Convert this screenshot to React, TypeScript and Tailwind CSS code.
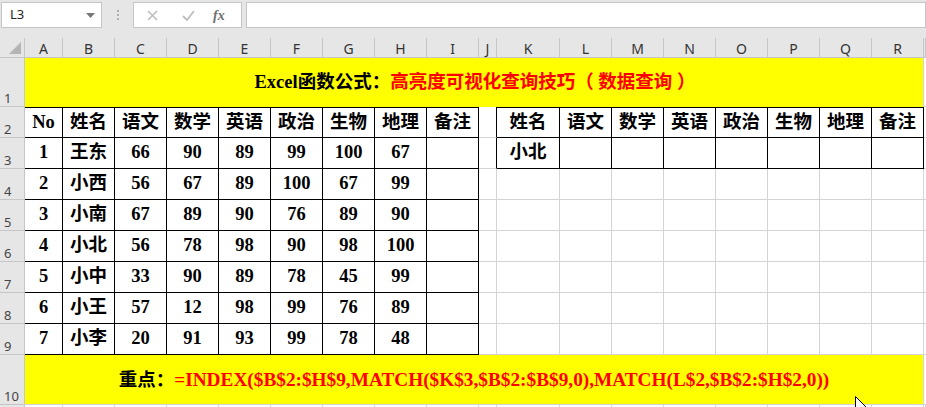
import React from 'react';

const COL_LETTERS = ['A', 'B', 'C', 'D', 'E', 'F', 'G', 'H', 'I', 'J', 'K', 'L', 'M', 'N', 'O', 'P', 'Q', 'R', ''];

const LEFT_HEAD = ['No', '姓名', '语文', '数学', '英语', '政治', '生物', '地理', '备注'];
const LEFT_ROWS: (string | number)[][] = [
  [1, '王东', 66, 90, 89, 99, 100, 67, ''],
  [2, '小西', 56, 67, 89, 100, 67, 99, ''],
  [3, '小南', 67, 89, 90, 76, 89, 90, ''],
  [4, '小北', 56, 78, 98, 90, 98, 100, ''],
  [5, '小中', 33, 90, 89, 78, 45, 99, ''],
  [6, '小王', 57, 12, 98, 99, 76, 89, ''],
  [7, '小李', 20, 91, 93, 99, 78, 48, ''],
];
const RIGHT_HEAD = ['姓名', '语文', '数学', '英语', '政治', '生物', '地理', '备注'];
const RIGHT_ROW = ['小北', '', '', '', '', '', '', ''];

const cellFont = "font-['Liberation_Serif','Noto_Sans_CJK_SC',serif] font-bold text-[18.5px] text-black";

function RowHead({ n }: { n: number }) {
  return (
    <div className="flex items-end pl-[4px] pb-[1px] bg-[#e6e6e6] border-r border-b border-[#c6c6c6] text-[13px] leading-none text-[#444] font-['Noto_Sans',sans-serif]">
      {n}
    </div>
  );
}

function Cell({ value, cls }: { value: string | number; cls: string }) {
  return (
    <div className={`flex items-center justify-center bg-white whitespace-nowrap ${cellFont} ${cls}`}>
      {value}
    </div>
  );
}

function bodyRow(r: number) {
  // r = sheet row number 2..9
  const out: React.ReactNode[] = [];
  for (let c = 0; c < 19; c++) {
    let value: string | number = '';
    let cls = '';
    if (c <= 8) {
      value = r === 2 ? LEFT_HEAD[c] : LEFT_ROWS[r - 3][c];
      cls = `border-r border-b border-black ${r === 2 ? 'border-t' : ''}`;
    } else if (c === 9) {
      cls = `border-r border-b border-b-[#d4d4d4] ${r <= 3 ? 'border-r-black' : 'border-r-[#d4d4d4]'}`;
    } else if (c <= 17) {
      if (r <= 3) {
        value = r === 2 ? RIGHT_HEAD[c - 10] : RIGHT_ROW[c - 10];
        cls = `border-r border-b border-black ${r === 2 ? 'border-t' : ''}`;
      } else {
        cls = 'border-r border-b border-[#d4d4d4]';
      }
    } else {
      cls = 'border-b border-[#d4d4d4]';
    }
    out.push(<Cell key={`${r}-${c}`} value={value} cls={cls} />);
  }
  return out;
}

export default function App() {
  return (
    <div className="relative w-[926px] h-[407px] overflow-hidden bg-white select-none">
      {/* formula bar */}
      <div className="h-[38px] bg-[#e6e6e6] flex items-start pt-[2px] pl-[1px]">
        <div className="w-[101px] h-[26px] bg-white border border-[#c6c6c6] flex items-center justify-between pl-[8px] pr-[6px]">
          <span className="text-[13px] text-[#222] font-['Noto_Sans',sans-serif]">L3</span>
          <svg width="9" height="5" viewBox="0 0 9 5"><path d="M0 0h9L4.5 5z" fill="#777" /></svg>
        </div>
        <div className="w-[31px] h-[26px] flex flex-col items-center justify-center gap-[2px]">
          <span className="w-[2px] h-[2px] bg-[#b0b0b0]" />
          <span className="w-[2px] h-[2px] bg-[#b0b0b0]" />
          <span className="w-[2px] h-[2px] bg-[#b0b0b0]" />
        </div>
        <div className="w-[109px] h-[26px] bg-white border border-[#c6c6c6] flex items-center">
          <svg className="ml-[13px]" width="11" height="11" viewBox="0 0 11 11">
            <path d="M1 1l9 9M10 1l-9 9" stroke="#bdbdbd" strokeWidth="1.6" />
          </svg>
          <svg className="ml-[24px]" width="13" height="11" viewBox="0 0 13 11">
            <path d="M1 6l4 4L12 1" stroke="#bdbdbd" strokeWidth="1.8" fill="none" />
          </svg>
          <span className="ml-[18px] text-[14px] italic font-bold text-[#6f6f6f] font-['Liberation_Serif',serif]">fx</span>
        </div>
        <div className="ml-[4px] flex-1 h-[26px] bg-white border border-[#c6c6c6]" />
      </div>

      {/* sheet */}
      <div className="grid grid-cols-[25px_38px_repeat(8,52px)_18px_63px_repeat(7,52px)_1fr] grid-rows-[20px_49px_repeat(8,31px)_50px_1fr]">
        {/* header row */}
        <div className="relative bg-[#e6e6e6] border-r border-b border-[#c6c6c6]">
          <svg className="absolute right-[3px] bottom-[3px]" width="12" height="12" viewBox="0 0 12 12">
            <path d="M12 0V12H0z" fill="#b4b4b4" />
          </svg>
        </div>
        {COL_LETTERS.map((l, i) => (
          <div
            key={`h-${i}`}
            className="flex items-end justify-center pb-[1px] bg-[#e6e6e6] border-r border-b border-[#c6c6c6] text-[14px] leading-none text-[#333] font-['Noto_Sans',sans-serif]"
          >
            {l}
          </div>
        ))}

        {/* row 1 */}
        <RowHead n={1} />
        <div className={`col-span-18 flex items-center justify-center bg-[#ffff00] border-r border-[#d4d4d4] ${cellFont}`}>
          <span className="pl-[2px]">Excel函数公式：</span>
          <span className="text-[#ff0000]">高亮度可视化查询技巧（ 数据查询 ）</span>
        </div>
        <div className="bg-white border-b border-[#d4d4d4]" />

        {[2, 3, 4, 5, 6, 7, 8, 9].map((r) => (
          <React.Fragment key={r}>
            <RowHead n={r} />
            {bodyRow(r)}
          </React.Fragment>
        ))}

        {/* row 10 */}
        <RowHead n={10} />
        <div className={`col-span-18 flex items-center justify-center pt-[2px] bg-[#ffff00] border-r border-b border-[#d4d4d4] ${cellFont}`}>
          <span>重点：</span>
          <span className="text-[#ff0000] text-[19.3px]">=INDEX($B$2:$H$9,MATCH($K$3,$B$2:$B$9,0),MATCH(L$2,$B$2:$H$2,0))</span>
        </div>
        <div className="bg-white border-b border-[#d4d4d4]" />

        {/* row 11 (partial) */}
        <div className="bg-[#e6e6e6] border-r border-[#c6c6c6]" />
        {COL_LETTERS.map((_, i) => (
          <div key={`r11-${i}`} className="h-[10px] bg-white border-r border-[#d4d4d4]" />
        ))}
      </div>

      {/* mouse pointer */}
      <svg className="absolute left-[855px] top-[396px]" width="13" height="20" viewBox="0 0 13 20">
        <path d="M0.5 0.5V16.5L4.5 12.5L7.5 19L9.5 18L6.5 11.5H11.5Z" fill="#fff" stroke="#000" strokeWidth="1" />
      </svg>
    </div>
  );
}
